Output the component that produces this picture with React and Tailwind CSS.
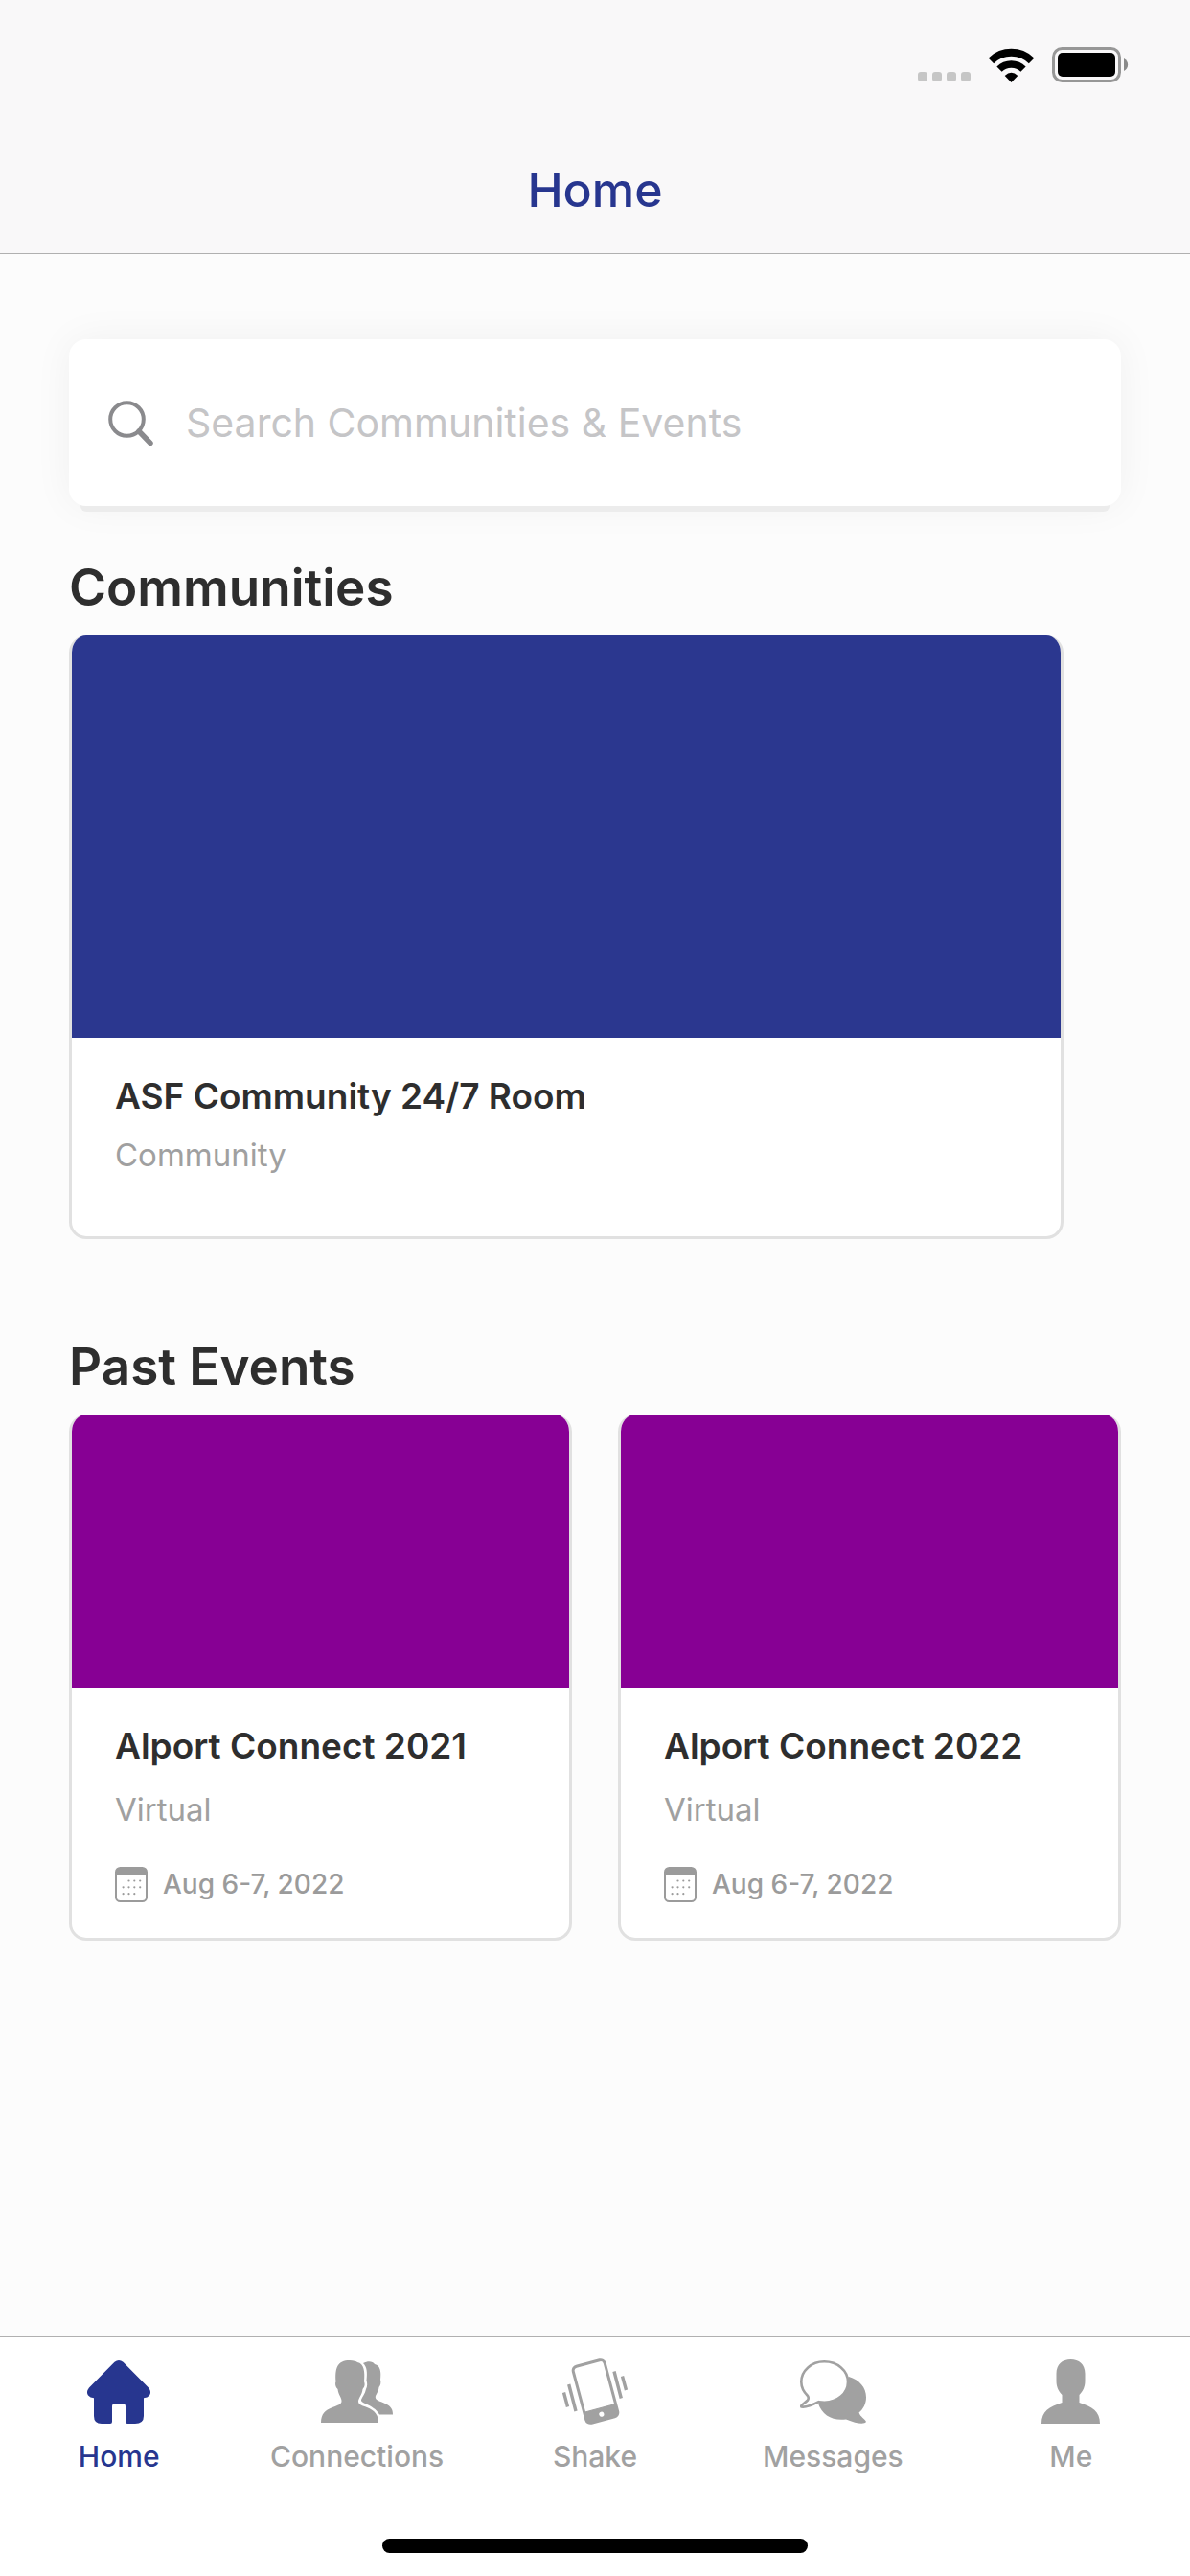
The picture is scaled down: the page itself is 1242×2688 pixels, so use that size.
import React, { useState } from 'react';

const communities = [
  { id: 1, name: 'ASF Community 24/7 Room', type: 'Community' },
];

const pastEvents = [
  { id: 1, name: 'Alport Connect 2021', place: 'Virtual', dates: 'Aug 6-7, 2022' },
  { id: 2, name: 'Alport Connect 2022', place: 'Virtual', dates: 'Aug 6-7, 2022' },
];

const WifiIcon = () => (
  <svg width="47" height="36" viewBox="0 0 47 36" fill="none" stroke="#000">
    <path d="M2.4 13.4A30.3 30.3 0 0 1 44.6 13.4" strokeWidth="8" />
    <path d="M11 22.2A17.7 17.7 0 0 1 36 22.2" strokeWidth="7.5" />
    <path d="M23.5 36L16.7 29Q23.5 22.5 30.3 29Z" fill="#000" stroke="none" />
  </svg>
);

const BatteryIcon = () => (
  <svg width="80" height="37" viewBox="0 0 80 37">
    <rect x="1.5" y="1.5" width="69" height="34" rx="9" fill="none" stroke="#979797" strokeWidth="3" />
    <rect x="6" y="6" width="60" height="25" rx="5" fill="#000" />
    <path d="M75 12C80.5 14.5 80.5 22.5 75 25Z" fill="#8a8a8a" />
  </svg>
);

const SearchIcon = () => (
  <svg width="47" height="47" viewBox="0 0 47 47" fill="none" stroke="#8a8a8d">
    <circle cx="19.5" cy="19.5" r="17.3" strokeWidth="4" />
    <path d="M32 32L44 44.5" strokeWidth="5.5" strokeLinecap="round" />
  </svg>
);

const CalendarIcon = () => (
  <svg width="34" height="37" viewBox="0 0 34 37" fill="#9b9b9b">
    <rect x="1" y="1" width="32" height="35" rx="4.5" fill="none" stroke="#9b9b9b" strokeWidth="2" />
    <path d="M1 8.5V5Q1 1 5 1H29Q33 1 33 5V8.5Z" />
    {[[14.5, 14.5], [20.3, 14.5], [26.2, 14.5], [8.6, 21.3], [14.5, 21.3], [20.3, 21.3], [26.2, 21.3], [8.6, 28.2], [14.5, 28.2], [20.3, 28.2]].map(([x, y]) => (
      <circle key={`${x}-${y}`} cx={x} cy={y} r="1.1" />
    ))}
  </svg>
);

const HomeIcon = () => (
  <svg width="66" height="66" viewBox="0 0 66 66" fill="currentColor">
    <path d="M28.5 1.8Q33 -1.6 37.5 1.8L64 28.5Q67.5 33 65 36.5Q63 39 59 39.3V58Q59 66 50 66H42Q40 66 40 64V48Q40 45 37 45H29Q26 45 26 48V64Q26 66 24 66H15Q7 66 7 58V39.3Q3 39 1 36.5Q-1.5 33 2 28.5Z" />
  </svg>
);

const ConnectionsIcon = () => (
  <svg width="75" height="65" viewBox="0 0 75 65" fill="currentColor">
    <path d="M0 65C0 56 4 52 12 49C18 46.5 21 46 21.5 43C22 39 18 36 17.5 30C15 28 14.5 24 15.5 22C14.5 8 17 0 30 0C34 0 37 1 38 2C45 3 46 12 45 22C46.5 26 45 28 43.5 30C43 36 39 39 39 43C39.5 46.5 43 47 48 49C56 52 60 57 60 65Z" />
    <path d="M44 3C50 0 54 1.5 56 4C62 5 63 12 62 20C63 24 62 26 60.5 28C60 34 56 36 57 39.5C58 42.5 64 43 68 45.5C73 48 75 51 75 56.5H61C58 51 52 47.5 46 45C43 43.5 41.5 42.5 42 41C43 38 46 35 47 30C48.5 27 48.5 24 47.5 21C48.5 12 48 7 44 3Z" />
  </svg>
);

const ShakeIcon = () => (
  <svg width="68" height="69" viewBox="0 0 68 69" fill="none" stroke="currentColor">
    <g transform="translate(34.5 34.5) rotate(-15)">
      <rect x="-17" y="-30.5" width="34" height="61" rx="4.5" strokeWidth="3" />
      <path d="M-17 18H17V26Q17 30.5 12.5 30.5H-12.5Q-17 30.5 -17 26Z" fill="currentColor" />
      <circle cx="0" cy="24.5" r="2.6" fill="#fff" stroke="none" />
    </g>
    <path d="M1.5 35.5L5.5 50.5M6.7 27L14 55M54 13.5L61.3 41.5M62.5 18.5L66.5 33" strokeWidth="3.4" />
  </svg>
);

const MessagesIcon = () => (
  <svg width="69" height="66" viewBox="0 0 69 66">
    <path d="M51 17C62 20 69 28.5 69 38.5C69 45 66 51 61.5 54.5C63 59 67.5 60.5 69 64C67 67 59 66 48 61.5C34 63.5 23 57 19 45Z" fill="currentColor" />
    <path d="M25.3 1.3C39 1.3 50 10.5 50 22.5C50 34.5 39 43.7 25.5 43.7C23 43.7 21.5 43.5 19.5 43.2C14 46 7 49.5 1.5 48.5C0 47 4 45.5 8 41.5C9 40 9 38.5 8 37C4 33 1.3 28 1.3 22.5C1.3 10.5 12 1.3 25.3 1.3Z" fill="#fff" stroke="currentColor" strokeWidth="2.6" />
  </svg>
);

const MeIcon = () => (
  <svg width="61" height="67" viewBox="0 0 61 67" fill="currentColor">
    <path d="M0 67C0 54 8 49.5 21.5 45V37C17 32 15.5 28 15.5 22V15C15.5 5 22 0 30.5 0S45.5 5 45.5 15V22C45.5 28 44 32 39.5 37V45C53 49.5 61 54 61 67Z" />
  </svg>
);

const tabs = [
  { name: 'Home', Icon: HomeIcon },
  { name: 'Connections', Icon: ConnectionsIcon },
  { name: 'Shake', Icon: ShakeIcon },
  { name: 'Messages', Icon: MessagesIcon },
  { name: 'Me', Icon: MeIcon },
];

const App = () => {
  const [activeTab, setActiveTab] = useState('Home');
  const [search, setSearch] = useState('');

  return (
    <div className="min-h-screen flex flex-col bg-[#fcfcfc] font-['Inter',sans-serif] text-[#2e2e2e]">
      <header className="border-b border-[#b0b0b0] bg-[#f9f8f9]">
        <div className="flex justify-end items-end pt-[49px] pr-16 h-[86px]">
          <div className="flex gap-[5px] mr-[19px] pb-px">
            <span className="size-[10px] rounded-[3px] bg-[#c6c6c6]" />
            <span className="size-[10px] rounded-[3px] bg-[#c6c6c6]" />
            <span className="size-[10px] rounded-[3px] bg-[#c6c6c6]" />
            <span className="size-[10px] rounded-[3px] bg-[#c6c6c6]" />
          </div>
          <div className="mr-[19px]"><WifiIcon /></div>
          <BatteryIcon />
        </div>
        <h1 className="mt-20 mb-[34px] text-center text-[50px] leading-[64px] font-medium text-[#27368f]">Home</h1>
      </header>

      <main className="flex-1 px-[72px] pt-[89px]">
        <label className="flex items-center gap-[34px] h-[174px] px-[41px] rounded-[18px] bg-white shadow-[0_18px_0_-12px_#ececec,0_0_42px_rgba(0,0,0,0.05)]">
          <SearchIcon />
          <input
            type="search"
            aria-label="Search Communities & Events"
            placeholder="Search Communities & Events"
            value={search}
            onChange={(e) => setSearch(e.target.value)}
            className="flex-1 min-w-0 bg-transparent outline-none text-[41px] leading-[56px] placeholder:text-[#c5c5c7]"
          />
        </label>

        <section className="mt-[53px]">
          <h2 className="mb-[18px] text-[53px] leading-[64px] font-semibold">Communities</h2>
          {communities.map(c => (
            <article key={c.id} className="mr-[60px] overflow-hidden rounded-[18px] border-3 border-t-0 border-[#e1e1e1] bg-white">
              <div className="h-[420px] bg-[#2b378f]" />
              <div className="px-[45px] pt-[37px] pb-[63px]">
                <h3 className="text-[37px] leading-[48px] font-semibold">{c.name}</h3>
                <p className="mt-[15px] text-[33px] leading-[44px] text-[#a0a0a0]">{c.type}</p>
              </div>
            </article>
          ))}
        </section>

        <section className="mt-[101px]">
          <h2 className="mb-[18px] text-[53px] leading-[64px] font-semibold">Past Events</h2>
          <div className="grid grid-cols-2 gap-12">
            {pastEvents.map(e => (
              <article key={e.id} className="overflow-hidden rounded-[18px] border-3 border-t-0 border-[#e1e1e1] bg-white">
                <div className="h-[285px] bg-[#870094]" />
                <div className="px-[45px] pt-[37px] pb-9">
                  <h3 className="text-[37px] leading-[48px] font-semibold">{e.name}</h3>
                  <p className="mt-5 text-[33px] leading-[44px] text-[#a0a0a0]">{e.place}</p>
                  <div className="mt-9 flex items-center gap-4 text-[28px] leading-[40px] font-medium text-[#9b9b9b]">
                    <CalendarIcon />
                    <span>{e.dates}</span>
                  </div>
                </div>
              </article>
            ))}
          </div>
        </section>
      </main>

      <footer className="border-t border-[#b0b0b0] bg-white">
        <nav className="grid grid-cols-5">
          {tabs.map(({ name, Icon }) => (
            <button
              key={name}
              onClick={() => setActiveTab(name)}
              className={`flex flex-col items-center pt-[22px] ${activeTab === name ? 'text-[#27368f]' : 'text-[#a1a1a1]'}`}
            >
              <span className="flex items-center h-[69px]"><Icon /></span>
              <span className="mt-[15px] text-[30px] leading-[36px] font-medium">{name}</span>
            </button>
          ))}
        </nav>
        <div className="mx-auto mt-[68px] mb-6 h-[15px] w-[444px] rounded-full bg-black" />
      </footer>
    </div>
  );
};

export default App;
